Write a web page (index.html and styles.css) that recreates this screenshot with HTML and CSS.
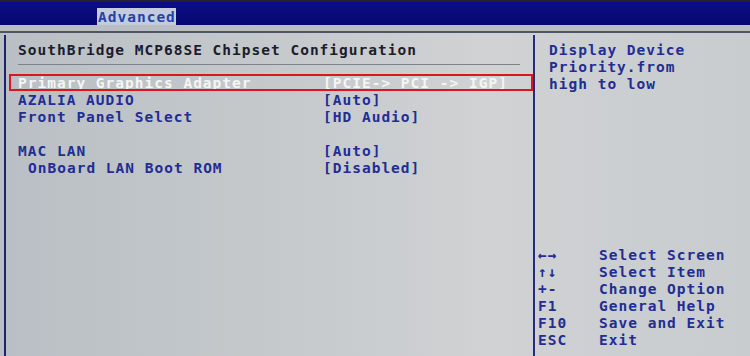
FILE: index.html
```html
<!DOCTYPE html>
<html>
<head>
<meta charset="utf-8">
<link rel="stylesheet" href="styles.css">
</head>
<body>
<div class="screen">
  <div class="topbar">
    <span class="tab">Advanced</span>
  </div>
  <div class="strip"></div>
  <div class="content">
    <div class="main">
      <div class="title">SouthBridge MCP68SE Chipset Configuration</div>
      <div class="rule"></div>
      <div class="rows">
        <div class="row selected"><span class="label">Primary Graphics Adapter</span><span class="value">[PCIE-&gt; PCI -&gt; IGP]</span></div>
        <div class="row"><span class="label">AZALIA AUDIO</span><span class="value">[Auto]</span></div>
        <div class="row"><span class="label">Front Panel Select</span><span class="value">[HD Audio]</span></div>
        <div class="row"></div>
        <div class="row"><span class="label">MAC LAN</span><span class="value">[Auto]</span></div>
        <div class="row"><span class="label sub">OnBoard LAN Boot ROM</span><span class="value">[Disabled]</span></div>
      </div>
    </div>
    <div class="divider"></div>
    <div class="side">
      <div class="help">Display Device<br>Priority.from<br>high to low</div>
      <div class="keys">
        <span class="k">←→</span><span>Select Screen</span>
        <span class="k">↑↓</span><span>Select Item</span>
        <span class="k">+-</span><span>Change Option</span>
        <span class="k">F1</span><span>General Help</span>
        <span class="k">F10</span><span>Save and Exit</span>
        <span class="k">ESC</span><span>Exit</span>
      </div>
    </div>
  </div>
</div>
</body>
</html>
```
FILE: styles.css
```css
html, body {
  margin: 0;
  padding: 0;
  background: #c4c8cb;
}
.screen {
  width: 750px;
  height: 356px;
  overflow: hidden;
  display: flex;
  flex-direction: column;
  font-family: "DejaVu Sans Mono", "Liberation Mono", monospace;
  font-weight: bold;
  font-size: 14.5px;
  letter-spacing: 1px;
  line-height: 17px;
  color: #222d94;
  background: linear-gradient(90deg, #b9bfc4 0%, #c6cacd 40%, #d0d2d3 65%, #c8cccf 100%);
}
.topbar {
  height: 23px;
  border-top: 2px solid #22232e;
  background: linear-gradient(180deg, #0c0e86, #060870);
  display: flex;
  align-items: flex-end;
  padding-left: 97px;
}
.tab {
  display: block;
  height: 17px;
  line-height: 18px;
  width: 78px;
  padding-left: 1px;
  background: #c3cbdc;
  color: #2442aa;
}
.strip {
  height: 6px;
  background: #b9bec5;
  border-bottom: 2px solid #4e5566;
}
.content {
  flex: 1;
  display: flex;
  margin-top: 2px;
  margin-left: 4px;
  border-left: 2px solid #1b2272;
}
.main {
  width: 527px;
  padding-top: 7px;
}
.title {
  padding-left: 12px;
  color: #1b1c2c;
}
.rule {
  margin: 5px 13px 9px 12px;
  height: 1px;
  background: #7d828c;
}
.rows {
  padding-left: 3px;
}
.row {
  height: 17px;
  line-height: 18px;
  display: flex;
  padding-left: 9px;
}
.row.selected {
  outline: 2px solid #e0141c;
  outline-offset: -2px;
  color: #f4f6f2;
}
.label {
  width: 305px;
  white-space: pre;
}
.label.sub {
  padding-left: 10px;
  width: 295px;
}
.value {
  white-space: pre;
}
.divider {
  width: 2px;
  background: #262c7c;
}
.side {
  flex: 1;
  display: flex;
  flex-direction: column;
  justify-content: space-between;
  padding: 7px 0 7px 0;
}
.help {
  padding-left: 14px;
}
.keys {
  display: grid;
  grid-template-columns: 61px auto;
  padding-left: 3px;
}
.keys span {
  white-space: pre;
}
```
